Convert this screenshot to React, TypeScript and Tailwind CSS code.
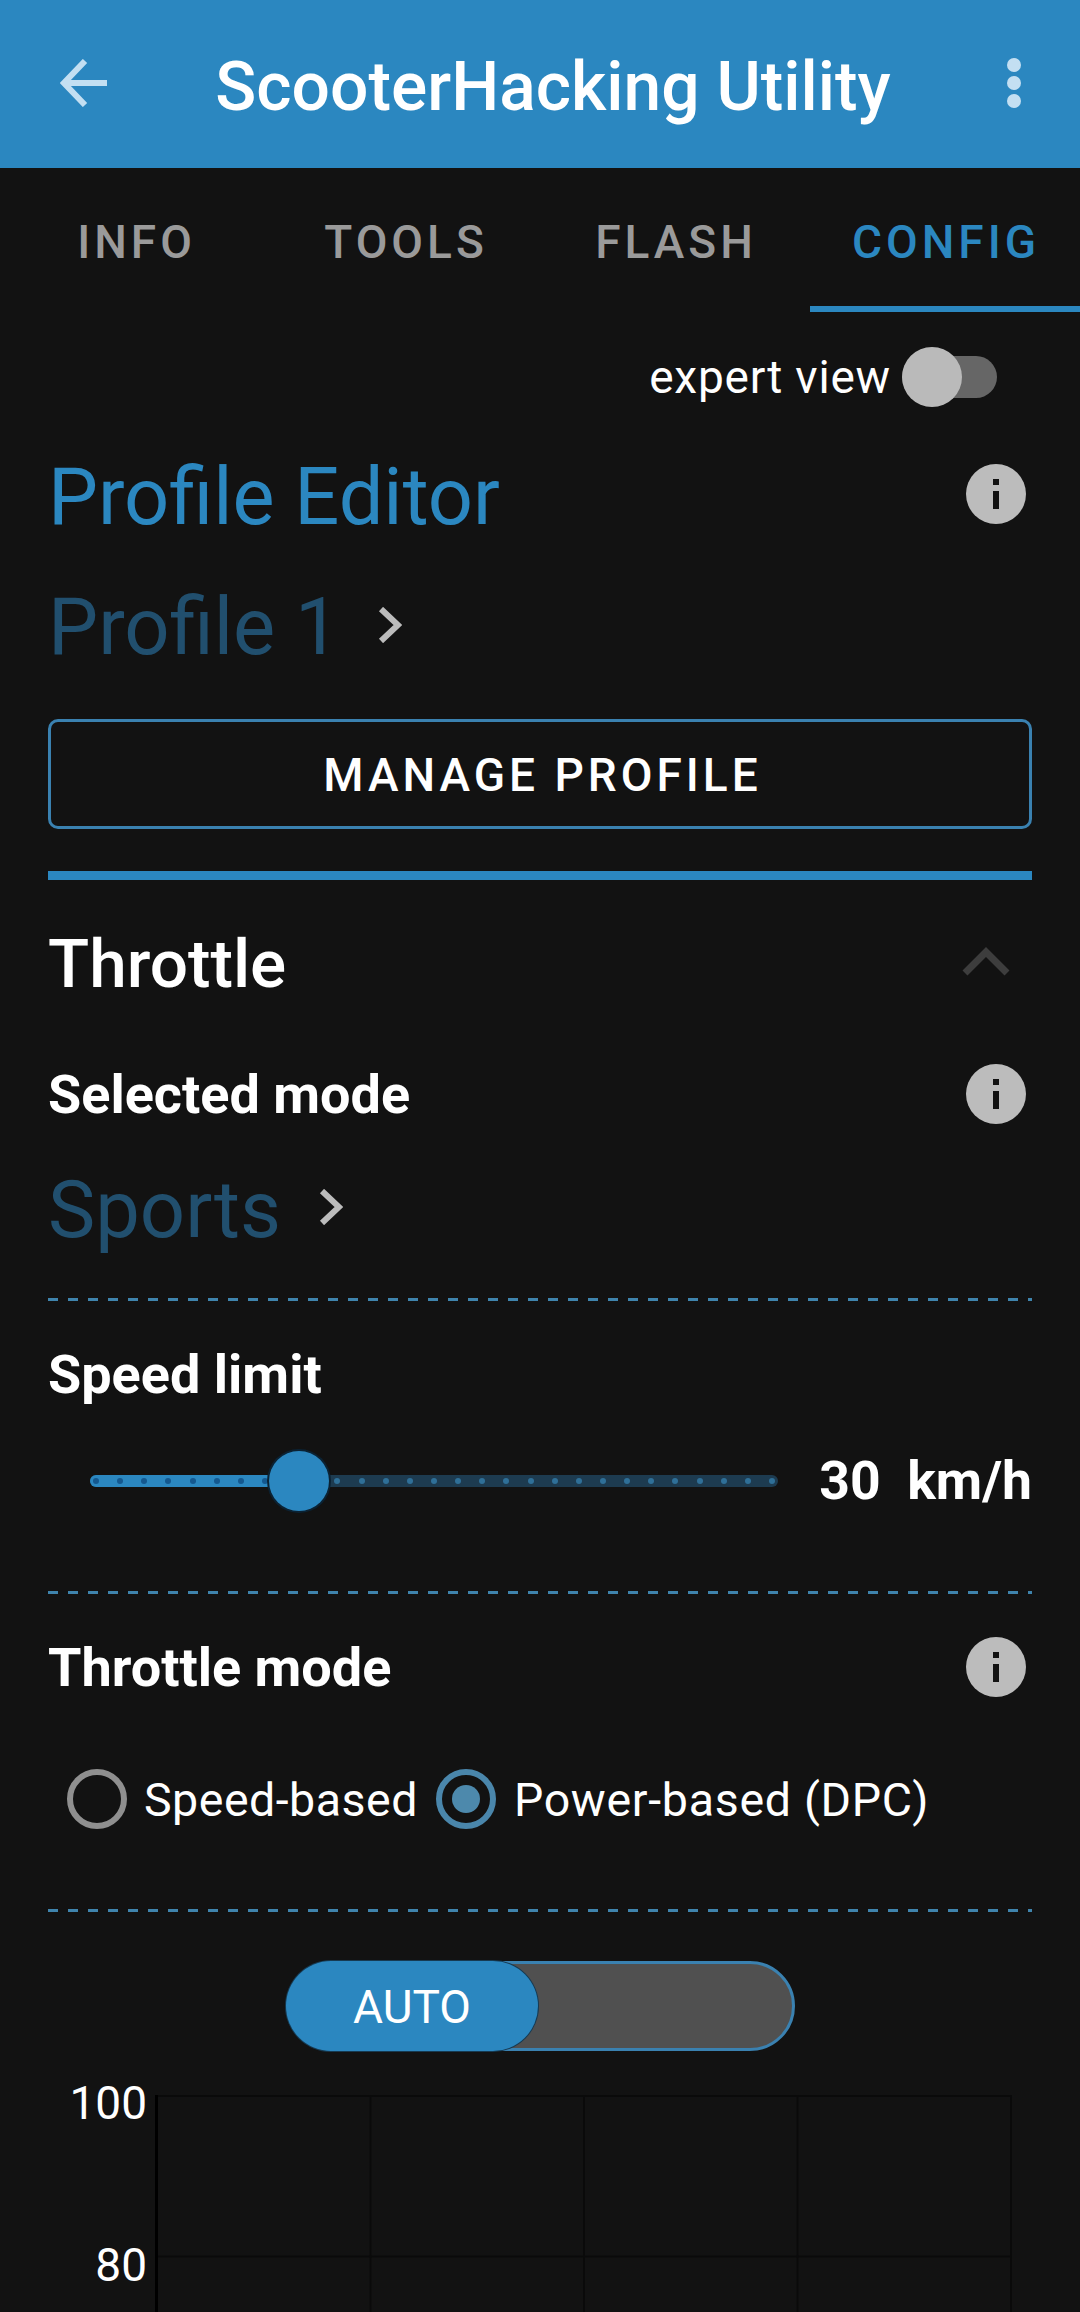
import React from "react";

function Info() {
  return (
    <svg width="60" height="60" viewBox="0 0 60 60" className="shrink-0">
      <circle cx="30" cy="30" r="30" fill="#bcbcbc" />
      <rect x="27" y="15" width="6" height="6" fill="#121212" />
      <rect x="27" y="27" width="6" height="18" fill="#121212" />
    </svg>
  );
}

function Chevron() {
  return (
    <svg width="24" height="36" viewBox="0 0 24 36" className="shrink-0">
      <path d="M3 2 L20 18 L3 34" fill="none" stroke="#bcbcbc" strokeWidth="6" />
    </svg>
  );
}

function Divider({ className }: { className: string }) {
  return (
    <div
      className={
        "h-[3px] mx-[48px] bg-[repeating-linear-gradient(90deg,#3f84ad_0,#3f84ad_10px,transparent_10px,transparent_20px)] " +
        className
      }
    />
  );
}

const ticks = Array.from({ length: 29 }, (_, i) => i);

export default function App() {
  return (
    <div className="w-[1080px] h-[2312px] overflow-hidden bg-[#121212] text-white font-['Roboto',sans-serif]">
      <header className="h-[168px] bg-[#2b87c0] flex items-center pb-[2px]">
        <svg width="48" height="48" viewBox="0 0 48 48" className="ml-[60px] shrink-0">
          <path d="M47 24 H5 M25 2 L4 24 L25 46" fill="none" stroke="#c3dff2" strokeWidth="6" />
        </svg>
        <div className="flex-1 text-center text-[67.7px] leading-[80px] font-medium pt-[7px] pr-[9px]">ScooterHacking Utility</div>
        <div className="flex flex-col gap-[4px] mr-[59px]">
          <span className="w-[14px] h-[14px] rounded-full bg-[#c3dff2]" />
          <span className="w-[14px] h-[14px] rounded-full bg-[#c3dff2]" />
          <span className="w-[14px] h-[14px] rounded-full bg-[#c3dff2]" />
        </div>
      </header>

      <nav className="h-[144px] grid grid-cols-4 text-[46px] font-medium tracking-[4px] text-[#9a9a9a]">
        <div className="flex items-center justify-center pt-[10px] pl-[3px] border-b-[6px] border-transparent">INFO</div>
        <div className="flex items-center justify-center pt-[10px] pl-[2px] border-b-[6px] border-transparent">TOOLS</div>
        <div className="flex items-center justify-center pt-[10px] pl-[2px] border-b-[6px] border-transparent">FLASH</div>
        <div className="flex items-center justify-center pt-[10px] pl-[2px] border-b-[6px] border-[#2b87c0] text-[#2b87c0]">CONFIG</div>
      </nav>

      <div className="mt-[35px] h-[60px] flex items-center justify-end pr-[83px]">
        <span className="text-[46px] leading-[60px] tracking-[0.8px] mr-[11px]">expert view</span>
        <div className="relative w-[95px] h-[42px] rounded-full bg-[#666666]">
          <span className="absolute left-0 top-[-9px] w-[60px] h-[60px] rounded-full bg-[#bababa]" />
        </div>
      </div>

      <div className="mt-[57px] h-[60px] flex items-center justify-between pl-[48px] pr-[54px]">
        <span className="text-[79.3px] leading-[60px] pt-[5px] text-[#2b87c0]">Profile Editor</span>
        <Info />
      </div>

      <div className="mt-[62px] h-[80px] flex items-center pl-[48px]">
        <span className="text-[79.5px] leading-[80px] pt-[2px] text-[#214f6e]">Profile 1</span>
        <span className="ml-[38px] -mt-[2px]"><Chevron /></span>
      </div>

      <button className="mt-[53px] mx-[48px] w-[984px] h-[110px] block rounded-[10px] border-[3px] border-[#3a81b0] text-[46px] font-medium tracking-[4px] text-white pt-[3px] pl-[5px]">
        MANAGE PROFILE
      </button>

      <div className="mt-[42px] mx-[48px] h-[9px] bg-[#2b87c0]" />

      <div className="mt-[42px] h-[80px] flex items-center justify-between pl-[48px] pr-[70px]">
        <span className="text-[67.5px] leading-[80px] font-medium pt-[3px]">Throttle</span>
        <svg width="48" height="30" viewBox="0 0 48 30" className="-mt-[2px]">
          <path d="M3 27 L24 6 L45 27" fill="none" stroke="#3d3d3d" strokeWidth="7" />
        </svg>
      </div>

      <div className="mt-[62px] h-[60px] flex items-center justify-between pl-[48px] pr-[54px]">
        <span className="text-[54px] leading-[60px] font-bold pt-[1px]">Selected mode</span>
        <Info />
      </div>

      <div className="mt-[46px] h-[80px] flex items-center pl-[48px]">
        <span className="text-[79.5px] leading-[80px] text-[#214f6e]">Sports</span>
        <span className="ml-[38px] -mt-[6px]"><Chevron /></span>
      </div>

      <Divider className="mt-[48px]" />

      <div className="mt-[44px] h-[60px] flex items-center pl-[48px]">
        <span className="text-[54px] leading-[60px] font-bold">Speed limit</span>
      </div>

      <div className="mt-[46px] h-[60px] flex items-center pl-[90px] pr-[48px]">
        <div className="relative w-[688px] h-[12px] rounded-full bg-[#1d3b50]">
          <div className="absolute left-0 top-0 h-[12px] w-[209px] rounded-l-full bg-[#2b87c0]" />
          <div className="absolute inset-x-[3px] top-[3px] flex justify-between">
            {ticks.map((i) => (
              <span
                key={i}
                className={i < 9 ? "w-[6px] h-[6px] rounded-full bg-[#14588f]" : "w-[6px] h-[6px] rounded-full bg-[#2f6f97]"}
              />
            ))}
          </div>
          <span className="absolute left-[179px] top-[-24px] w-[60px] h-[60px] rounded-full bg-[#2b87c0] shadow-[0_0_0_2px_#0b2233]" />
        </div>
        <span className="ml-auto text-[53.5px] leading-[60px] font-bold whitespace-pre">30  km/h</span>
      </div>

      <Divider className="mt-[80px]" />

      <div className="mt-[43px] h-[60px] flex items-center justify-between pl-[48px] pr-[54px]">
        <span className="text-[54px] leading-[60px] font-bold pt-[2px]">Throttle mode</span>
        <Info />
      </div>

      <div className="mt-[72px] h-[60px] flex items-center pl-[67px] text-[46.5px] leading-[60px] tracking-[0.5px]">
        <span className="w-[60px] h-[60px] rounded-full border-[6px] border-[#8f8f8f]" />
        <span className="ml-[17px] pt-[2px]">Speed-based</span>
        <span className="ml-[18px] w-[60px] h-[60px] rounded-full border-[6px] border-[#4a86ab] flex items-center justify-center">
          <span className="w-[28px] h-[28px] rounded-full bg-[#4d89ac]" />
        </span>
        <span className="ml-[18px] pt-[2px] tracking-[0.7px]">Power-based (DPC)</span>
      </div>

      <Divider className="mt-[80px]" />

      <div className="mt-[49px] w-[509px] h-[90px] ml-[286px] rounded-full border-[3px] border-[#3a81b0] bg-[#505050]">
        <div className="w-[252px] h-[90px] -mt-[3px] -ml-[3px] pt-[2px] rounded-full bg-[#2b87c0] shadow-[0_0_0_1px_#163a52] flex items-center justify-center text-[46px]">
          AUTO
        </div>
      </div>

      <div className="mt-[44px] flex">
        <div className="w-[147px] shrink-0 text-right text-[46px] leading-[50px] -mt-[17px]">
          <div className="h-[162px]">100</div>
          <div>80</div>
        </div>
        <svg width="860" height="221" viewBox="0 0 860 221" className="ml-[8px] shrink-0">
          <path d="M0 1 H857 M215.5 0 V221 M429 0 V221 M642.5 0 V221 M856 0 V221 M2 161.5 H856" stroke="#0a0a0a" strokeWidth="2" fill="none" />
          <path d="M1.5 0 V221" stroke="#000" strokeWidth="3" fill="none" />
        </svg>
      </div>
    </div>
  );
}
